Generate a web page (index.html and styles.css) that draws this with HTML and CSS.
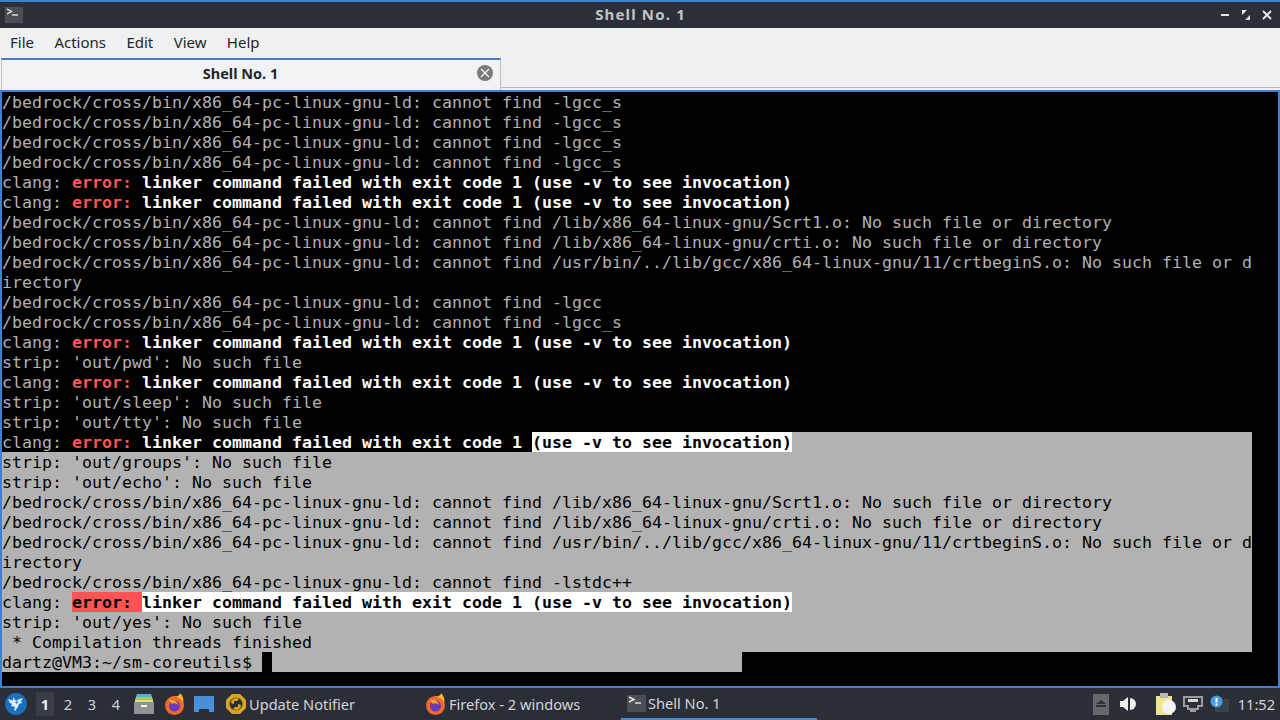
FILE: index.html
```html
<!DOCTYPE html>
<html lang="en">
<head>
<meta charset="utf-8">
<title>Shell No. 1</title>
<link rel="stylesheet" href="styles.css">
</head>
<body>
<div class="screen">
  <header class="titlebar">
    <div class="title-side"><svg width="18" height="16" viewBox="0 0 18 16"><rect width="18" height="16" fill="#4b4e52"/><path d="M2 2l4.500 2.500L2 7" fill="none" stroke="#e8e8e8" stroke-width="1.4"/><path d="M7 8h6" stroke="#e8e8e8" stroke-width="1.4"/></svg></div>
    <div class="title-text">Shell No. 1</div>
    <div class="title-side win-buttons">
      <svg width="10" height="10" viewBox="0 0 10 10"><path d="M1 5h8" stroke="#e6e6e6" stroke-width="2"/></svg>
      <svg width="10" height="10" viewBox="0 0 10 10"><path d="M1 0h5L1 5zM9 10H4l5-5z" fill="#e6e6e6"/></svg>
      <svg width="10" height="10" viewBox="0 0 10 10"><path d="M1 1l8 8M9 1l-8 8" stroke="#e6e6e6" stroke-width="2"/></svg>
    </div>
  </header>
  <nav class="menubar">
    <span>File</span><span>Actions</span><span>Edit</span><span>View</span><span>Help</span>
  </nav>
  <div class="tabbar">
    <div class="tab">
      <span class="tab-label">Shell No. 1</span>
      <svg class="tab-close" width="16" height="16" viewBox="0 0 16 16"><circle cx="8" cy="8" r="8" fill="#77797b"/><path d="M4 4l8 8M12 4l-8 8" stroke="#f4f4f4" stroke-width="1.3"/></svg>
    </div>
    <div class="tab-rest"></div>
  </div>
  <main class="terminal">
<div class="row">/bedrock/cross/bin/x86_64-pc-linux-gnu-ld: cannot find -lgcc_s</div>
<div class="row">/bedrock/cross/bin/x86_64-pc-linux-gnu-ld: cannot find -lgcc_s</div>
<div class="row">/bedrock/cross/bin/x86_64-pc-linux-gnu-ld: cannot find -lgcc_s</div>
<div class="row">/bedrock/cross/bin/x86_64-pc-linux-gnu-ld: cannot find -lgcc_s</div>
<div class="row">clang: <b class="err">error: </b><b>linker command failed with exit code 1 (use -v to see invocation)</b></div>
<div class="row">clang: <b class="err">error: </b><b>linker command failed with exit code 1 (use -v to see invocation)</b></div>
<div class="row">/bedrock/cross/bin/x86_64-pc-linux-gnu-ld: cannot find /lib/x86_64-linux-gnu/Scrt1.o: No such file or directory</div>
<div class="row">/bedrock/cross/bin/x86_64-pc-linux-gnu-ld: cannot find /lib/x86_64-linux-gnu/crti.o: No such file or directory</div>
<div class="row">/bedrock/cross/bin/x86_64-pc-linux-gnu-ld: cannot find /usr/bin/../lib/gcc/x86_64-linux-gnu/11/crtbeginS.o: No such file or d</div>
<div class="row">irectory</div>
<div class="row">/bedrock/cross/bin/x86_64-pc-linux-gnu-ld: cannot find -lgcc</div>
<div class="row">/bedrock/cross/bin/x86_64-pc-linux-gnu-ld: cannot find -lgcc_s</div>
<div class="row">clang: <b class="err">error: </b><b>linker command failed with exit code 1 (use -v to see invocation)</b></div>
<div class="row">strip: 'out/pwd': No such file</div>
<div class="row">clang: <b class="err">error: </b><b>linker command failed with exit code 1 (use -v to see invocation)</b></div>
<div class="row">strip: 'out/sleep': No such file</div>
<div class="row">strip: 'out/tty': No such file</div>
<div class="row split"><span>clang: <b class="err">error: </b><b>linker command failed with exit code 1 </b></span><span class="sel-fill"><b class="sel-bold">(use -v to see invocation)</b></span></div>
<div class="row sel">strip: 'out/groups': No such file</div>
<div class="row sel">strip: 'out/echo': No such file</div>
<div class="row sel">/bedrock/cross/bin/x86_64-pc-linux-gnu-ld: cannot find /lib/x86_64-linux-gnu/Scrt1.o: No such file or directory</div>
<div class="row sel">/bedrock/cross/bin/x86_64-pc-linux-gnu-ld: cannot find /lib/x86_64-linux-gnu/crti.o: No such file or directory</div>
<div class="row sel">/bedrock/cross/bin/x86_64-pc-linux-gnu-ld: cannot find /usr/bin/../lib/gcc/x86_64-linux-gnu/11/crtbeginS.o: No such file or d</div>
<div class="row sel">irectory</div>
<div class="row sel">/bedrock/cross/bin/x86_64-pc-linux-gnu-ld: cannot find -lstdc++</div>
<div class="row sel">clang: <b class="sel-err">error: </b><b class="sel-bold">linker command failed with exit code 1 (use -v to see invocation)</b></div>
<div class="row sel">strip: 'out/yes': No such file</div>
<div class="row sel"> * Compilation threads finished</div>
<div class="row sel short">dartz@VM3:~/sm-coreutils$ <span class="cursor"></span></div>
  </main>
  <footer class="taskbar">
    <svg class="start" width="22" height="22" viewBox="0 0 22 22"><circle cx="11" cy="11" r="11" fill="#1b6dbd"/><path d="M3 6l5 1.500L8 4l3 4 3-2 4-1-2 3 1 2-3 1-1 3-3 4-1-1 1-3-4-1 1-2-2-1z" fill="#d8edfb"/><path d="M10 9l3-1-1 3z" fill="#1b6dbd"/></svg>
    <div class="pager"><span class="ws ws-on">1</span><span class="ws">2</span><span class="ws">3</span><span class="ws">4</span></div>
    <svg class="cabinet" width="20" height="20" viewBox="0 0 20 20"><path d="M3 0h14l1 3H2z" fill="#5fb0c8"/><path d="M2 3h16l1 3H1z" fill="#9ccb62"/><path d="M1 6h18v2H1z" fill="#ecd98a"/><path d="M0 8h20v12H0z" fill="#909294"/><rect x="7" y="11" width="6" height="2" fill="#f0f0f0"/></svg>
    <svg class="fox" width="21" height="22" viewBox="0 0 21 22"><circle cx="10.500" cy="12.500" r="9.500" fill="#f2682c"/><path d="M9 4c4-1 8 1 10 6 1-4 0-7-3-10 0 2-3 4-7 4z" fill="#fbb62c"/><circle cx="10.500" cy="13" r="5.500" fill="#6a3bb8"/><path d="M5 7c3-1 8 0 9 5-2-2-5-2-6-1z" fill="#f7a12c"/></svg>
    <svg class="desk" width="20" height="16" viewBox="0 0 20 16"><path d="M0 0h20v16h-5v-3H5v3H0z" fill="#4a90d9"/></svg>
    <div class="task task-update">
      <svg width="22" height="22" viewBox="0 0 22 22"><path d="M7 1h8l6 6v8l-6 6H7l-6-6V7z" fill="#d9a520"/><circle cx="11" cy="11" r="6.500" fill="#2b2e37"/><path d="M6 10a5 5 0 0 1 8-4l-2 2H9v3zM16 12a5 5 0 0 1-8 4l2-2h3v-3z" fill="#d9a520"/></svg>
      <span>Update Notifier</span>
    </div>
    <div class="task task-fox">
      <svg width="21" height="22" viewBox="0 0 21 22"><circle cx="10.500" cy="12.500" r="9.500" fill="#f2682c"/><path d="M9 4c4-1 8 1 10 6 1-4 0-7-3-10 0 2-3 4-7 4z" fill="#fbb62c"/><circle cx="10.500" cy="13" r="5.500" fill="#6a3bb8"/><path d="M5 7c3-1 8 0 9 5-2-2-5-2-6-1z" fill="#f7a12c"/></svg>
      <span>Firefox - 2 windows</span>
    </div>
    <div class="task task-shell">
      <svg width="19" height="17" viewBox="0 0 19 17"><rect width="19" height="17" fill="#4b4e52"/><path d="M2 2l5 2.500L2 7" fill="none" stroke="#e8e8e8" stroke-width="1.400"/><path d="M8 8h6" stroke="#e8e8e8" stroke-width="1.400"/></svg>
      <span>Shell No. 1</span>
    </div>
    <div class="tray">
      <svg width="16" height="21" viewBox="0 0 16 21"><rect width="16" height="21" fill="#66686c"/><path d="M8 6l5 4H3zM3 11h10v2H3z" fill="#2e3037"/></svg>
      <svg class="tray-vol" width="16" height="14" viewBox="0 0 16 14"><path d="M0 4h3l5-4v14l-5-4H0z" fill="#f0f0f0"/><path d="M10 1a6 6 0 0 1 0 12z" fill="#f0f0f0"/></svg>
      <svg class="tray-clip" width="20" height="22" viewBox="0 0 20 22"><rect x="0" y="3" width="16" height="19" fill="#f1e590"/><rect x="4" y="0" width="8" height="5" fill="#b8b8b8"/><circle cx="13" cy="14" r="7" fill="#f4f4f4"/></svg>
      <svg class="tray-net" width="20" height="16" viewBox="0 0 20 16"><path d="M0 0h20v11h-4v3h-3v2H7v-2H4v-3H0z" fill="#9a9c9f"/><path d="M2 2h16v7h-4v3H6V9H2z" fill="#2e3037"/><path d="M5 3h10v3H5z" fill="#d8d8d8"/></svg>
      <svg class="tray-info" width="19" height="18" viewBox="0 0 19 18"><rect x="5" y="4" width="14" height="13" fill="#3a4448"/><circle cx="6.500" cy="6.500" r="6" fill="#4a9ae0"/><rect x="5.500" y="3" width="2" height="4.500" fill="#fff"/><rect x="5.500" y="8.500" width="2" height="2" fill="#fff"/></svg>
      <span class="clock">11:52</span>
    </div>
  </footer>
</div>
</body>
</html>
```
FILE: styles.css
```css
* { box-sizing: border-box; }
html, body { margin: 0; padding: 0; background: #2b2e37; }
.screen { width: 1280px; height: 720px; display: flex; flex-direction: column; overflow: hidden; font-family: "Noto Sans", sans-serif; }

.titlebar { height: 28px; flex: none; display: flex; align-items: center; border-top: 2px solid #3d7fcb; background: #2c2f38; padding: 0 8px 0 5px; }
.title-side { flex: 1; display: flex; }
.title-text { flex: none; color: #c2c4c6; font-weight: 700; font-size: 15px; letter-spacing: 1.15px; padding-bottom: 2px; margin-left: 4px; }
.win-buttons { justify-content: flex-end; gap: 11px; }

.menubar { height: 30px; flex: none; background: #eff0f1; display: flex; align-items: center; padding: 0 0 2px 10px; gap: 20.4px; font-size: 15px; color: #232629; }

.tabbar { height: 32px; flex: none; background: #eff0f1; padding-left: 1px; display: flex; align-items: flex-start; }
.tab { width: 500px; height: 32px; flex: none; display: flex; align-items: center; border-top: 2px solid #4a7cc4; border-left: 1px solid #c4c6c8; border-right: 1px solid #bcbec0; background: #f1f2f3; padding: 0 7px 5px 0; color: #232629; }
.tab-label { flex: 1; text-align: center; font-weight: 700; font-size: 14.5px; padding-left: 2px; }
.tab-close { flex: none; }
.tab-rest { flex: 1; height: 30px; border-bottom: 1px solid #b9bbbd; }

.terminal { flex: none; height: 598px; background: #000; border: 2px solid #3f80d0; color: #b2b2b2; font-family: "DejaVu Sans Mono", monospace; font-size: 16.61px; line-height: 22px; }
.row { height: 20px; width: 1250px; white-space: pre; }
.row b { color: #fff; font-weight: 700; }
.row b.err { color: #ff5454; }
.sel { background: #b2b2b2; color: #000; }
.short { width: 740px; }
.split { display: flex; }
.sel-fill { flex: 1; background: #b2b2b2; }
.row b.sel-bold { background: #fff; color: #000; display: inline-block; height: 20px; }
.row b.sel-err { background: #ff5454; color: #000; display: inline-block; height: 20px; }
.cursor { display: inline-block; width: 10px; height: 20px; background: #000; vertical-align: top; }

.taskbar { flex: 1; background: #2b2e37; display: flex; align-items: center; color: #d3d5d8; font-size: 14.6px; padding-left: 5px; }
.start { flex: none; }
.pager { display: flex; margin-left: 9px; width: 96px; flex: none; }
.ws { width: 24px; text-align: center; line-height: 24px; height: 24px; color: #d0d2d5; }
.ws-on { background: #3a3d47; color: #eee; font-weight: 700; width: 18px; margin-right: 2px; }
.cabinet { flex: none; margin-left: 2px; }
.fox { flex: none; margin-left: 10px; }
.desk { flex: none; margin-left: 9px; }
.task { display: flex; align-items: center; height: 100%; flex: none; }
.task-update { margin-left: 11px; gap: 2px; width: 200px; }
.task-fox { gap: 3px; width: 196px; }
.task-shell { height: 32px; width: 196px; padding-left: 6px; gap: 2px; border-bottom: 2px solid #4a8ad4; }
.tray { margin-left: auto; display: flex; align-items: center; padding-right: 5px; }
.tray-vol { margin-left: 11px; }
.tray-clip { margin-left: 20px; }
.tray-net { margin-left: 7px; }
.tray-info { margin-left: 7px; }
.clock { margin-left: 9px; }
```
